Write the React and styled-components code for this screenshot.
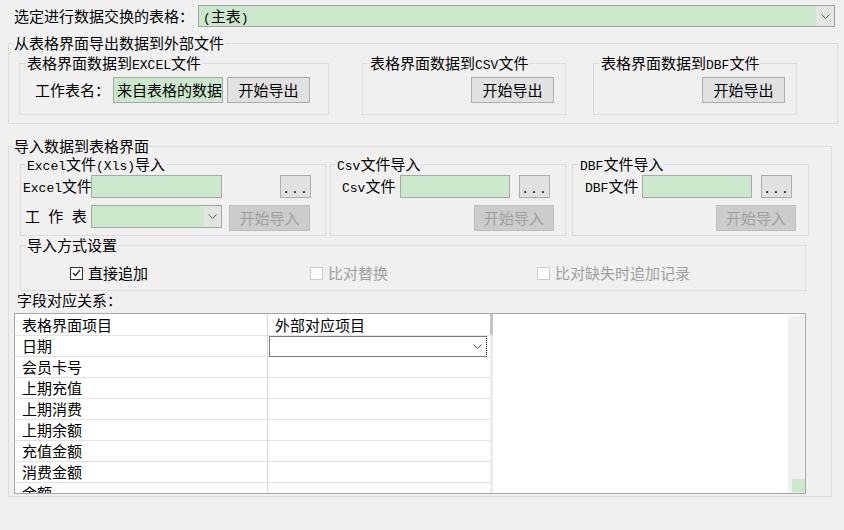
import React from 'react';
import styled, { createGlobalStyle } from 'styled-components';

const Global = createGlobalStyle`
  html, body { margin: 0; padding: 0; background: #f0f0f0; }
  body { font-family: "Noto Sans CJK SC", "Noto Sans", sans-serif; font-size: 15px; color: #000; }
  * { box-sizing: border-box; }
`;

const Page = styled.div`
  width: 844px;
  height: 530px;
  padding-top: 5px;
  overflow: hidden;
`;

const Lat = styled.span`
  font-family: "Liberation Mono", monospace;
  font-size: 13px;
  line-height: 1;
`;

const TopRow = styled.div`
  display: flex;
  align-items: center;
  height: 22px;
  padding: 0 9px 0 14px;
`;

const TopLabel = styled.span`
  width: 184px;
  line-height: 22px;
  white-space: nowrap;
`;

const Combo = styled.div`
  display: flex;
  align-items: stretch;
  height: ${p => p.$h || 22}px;
  width: ${p => (p.$w ? `${p.$w}px` : 'auto')};
  flex: ${p => (p.$w ? 'none' : '1')};
  background: ${p => p.$bg || '#cce8cc'};
  border: 1px solid ${p => p.$border || '#a6a6a6'};
  border-right: ${p => (p.$dotted ? '1px dotted #000' : undefined)};
  margin-left: ${p => p.$ml || 0}px;
`;

const ComboText = styled.span`
  flex: 1;
  padding-left: 4px;
  line-height: ${p => p.$lh || 20}px;
  white-space: nowrap;
  overflow: hidden;
`;

const ComboArrow = styled.span`
  width: ${p => p.$w || 17}px;
  display: flex;
  align-items: center;
  justify-content: center;
  background: ${p => p.$bg || 'transparent'};
`;

const Chevron = () => (
  <svg width="9" height="5" viewBox="0 0 9 5">
    <path d="M0.5 0.5 L4.5 4.5 L8.5 0.5" stroke="#5a5a5a" strokeWidth="1" fill="none" />
  </svg>
);

const Group = styled.fieldset`
  margin: ${p => p.$m || '0'};
  padding: ${p => p.$p || '0'};
  width: ${p => p.$w}px;
  min-width: 0;
  border: 1px solid #dcdcdc;
  flex: none;
`;

const Legend = styled.legend`
  padding: 0 1px;
  margin-left: ${p => (p.$ml !== undefined ? p.$ml : 6)}px;
  height: 18px;
  line-height: 18px;
  font-size: 15px;
  white-space: nowrap;
  overflow: visible;
`;

const GroupRow = styled.div`
  display: flex;
  align-items: flex-start;
  padding-left: ${p => p.$pl || 0}px;
`;

const InnerRow = styled.div`
  display: flex;
  align-items: ${p => p.$align || 'center'};
  justify-content: ${p => p.$justify || 'flex-start'};
  height: ${p => p.$h || 26}px;
  padding-left: ${p => p.$pl || 0}px;
  padding-right: ${p => p.$pr || 0}px;
  margin-top: ${p => p.$mt || 0}px;
`;

const Label = styled.span`
  width: ${p => p.$w}px;
  height: 20px;
  flex: none;
  white-space: pre;
  word-spacing: ${p => p.$ws || 0}px;
  line-height: 20px;
  margin-top: ${p => p.$mt || 0}px;
`;

const Input = styled.div`
  width: ${p => p.$w}px;
  height: ${p => p.$h || 23}px;
  flex: none;
  background: #cce8cc;
  border: 1px solid #a9a9a9;
  padding-left: 3px;
  line-height: ${p => (p.$h || 23) - 2}px;
  white-space: nowrap;
  overflow: hidden;
`;

const Button = styled.button`
  width: ${p => p.$w}px;
  height: ${p => p.$h || 26}px;
  margin-left: ${p => p.$ml || 0}px;
  flex: none;
  padding: 0;
  background: ${p => (p.disabled ? '#cccccc' : '#e1e1e1')};
  border: 1px solid ${p => (p.disabled ? '#bfbfbf' : '#adadad')};
  color: ${p => (p.disabled ? '#a0a0a0' : '#000')};
  font-family: inherit;
  font-size: 15px;
  line-height: ${p => (p.$h || 26) - 2}px;
`;

const Dots = styled.span`
  font-family: "Liberation Mono", monospace;
  font-size: 13px;
  letter-spacing: 1px;
`;

const ImportCol = styled.div`
  display: flex;
  flex-direction: column;
`;

const CheckRow = styled.div`
  display: grid;
  grid-template-columns: 240px 227px auto;
  height: 18px;
  padding-left: 49px;
  align-items: center;
`;

const CheckItem = styled.label`
  display: flex;
  align-items: center;
  gap: 5px;
  height: 18px;
  color: ${p => (p.$disabled ? '#a0a0a0' : '#000')};
  line-height: 18px;
`;

const Box = styled.span`
  width: 13px;
  height: 13px;
  border: 1px solid ${p => (p.$disabled ? '#cccccc' : '#333333')};
  background: #fff;
  display: flex;
  align-items: center;
  justify-content: center;
`;

const Check = ({ checked, disabled, children }) => (
  <CheckItem $disabled={disabled}>
    <Box $disabled={disabled}>
      {checked && (
        <svg width="9" height="8" viewBox="0 0 9 8">
          <path d="M1 4 L3.5 6.5 L8 1" stroke="#222" strokeWidth="1.2" fill="none" />
        </svg>
      )}
    </Box>
    {children}
  </CheckItem>
);

const FieldLabel = styled.div`
  height: 22px;
  padding-left: 8px;
  line-height: 18px;
`;

const Table = styled.div`
  margin-left: 5px;
  width: 792px;
  height: 181px;
  border: 1px solid #a8a8a8;
  background: #fff;
  display: flex;
  overflow: hidden;
`;

const Grid = styled.div`
  width: 475px;
  flex: none;
  overflow: hidden;
`;

const GridRow = styled.div`
  display: grid;
  grid-template-columns: 253px 222px;
  height: ${p => (p.$header ? 22 : 21)}px;
  border-bottom: 1px solid #e2e2e2;
`;

const Cell = styled.div`
  padding-left: ${p => (p.$combo ? 1 : 7)}px;
  height: ${p => (p.$header ? 21 : 20)}px;
  line-height: ${p => (p.$header ? 21 : 20)}px;
  border-right: ${p => (p.$first ? '1px solid #dadada' : 'none')};
  white-space: nowrap;
`;

const CellCombo = styled(Combo)`
  position: relative;
  z-index: 1;
`;

const Strip = styled.div`
  width: 3px;
  flex: none;
  background: linear-gradient(#c4c4c4 0 21px, #ebebeb 21px);
`;

const Spacer = styled.div`
  flex: 1;
`;

const VScroll = styled.div`
  width: 17px;
  flex: none;
  margin-top: 2px;
  background: #f0f0f0;
  display: flex;
  flex-direction: column;
  justify-content: flex-end;
  align-items: flex-end;
  padding-bottom: 1px;
`;

const Thumb = styled.div`
  width: 13px;
  height: 13px;
  background: #cce8cc;
`;

const rows = ['日期', '会员卡号', '上期充值', '上期消费', '上期余额', '充值金额', '消费金额', '余额'];

export default function App() {
  return (
    <>
      <Global />
      <Page>
        <TopRow>
          <TopLabel>选定进行数据交换的表格：</TopLabel>
          <Combo $border="#a0a0a0">
            <ComboText>
              <Lat>(</Lat>主表<Lat>)</Lat>
            </ComboText>
            <ComboArrow $w={18} $bg="#e1e8df">
              <Chevron />
            </ComboArrow>
          </Combo>
        </TopRow>

        <Group $w={830} $m="7px 0 0 8px" $p="2px 0 8px 0">
          <Legend $ml={4}>从表格界面导出数据到外部文件</Legend>
          <GroupRow $pl={10}>
            <Group $w={310} $p="5px 0 11px 0">
              <Legend>表格界面数据到<Lat>EXCEL</Lat>文件</Legend>
              <InnerRow $pl={15}>
                <Label $w={78}>工作表名：</Label>
                <Input $w={110} $h={26}>来自表格的数据</Input>
                <Button $w={83} $ml={4}>开始导出</Button>
              </InnerRow>
            </Group>
            <Group $w={204} $m="0 0 0 33px" $p="5px 0 11px 0">
              <Legend>表格界面数据到<Lat>CSV</Lat>文件</Legend>
              <InnerRow $justify="flex-end" $pr={11}>
                <Button $w={83}>开始导出</Button>
              </InnerRow>
            </Group>
            <Group $w={204} $m="0 0 0 27px" $p="5px 0 11px 0">
              <Legend>表格界面数据到<Lat>DBF</Lat>文件</Legend>
              <InnerRow $justify="flex-end" $pr={11}>
                <Button $w={83}>开始导出</Button>
              </InnerRow>
            </Group>
          </GroupRow>
        </Group>

        <Group $w={824} $m="13px 0 0 8px" $p="0 0 2px 0">
          <Legend $ml={4}>导入数据到表格界面</Legend>
          <GroupRow $pl={11}>
            <Group $w={306} $p="2px 0 4px 0">
              <Legend $ml={5}>
                <Lat>Excel</Lat>文件<Lat>(Xls)</Lat>导入
              </Legend>
              <ImportCol>
                <InnerRow $h={23} $pl={2}>
                  <Label $w={68} $mt={-2}>
                    <Lat>Excel</Lat>文件
                  </Label>
                  <Input $w={131} />
                  <Button $w={31} $h={23} $ml={58}>
                    <Dots>...</Dots>
                  </Button>
                </InnerRow>
                <InnerRow $h={26} $mt={7} $pl={4} $align="flex-start">
                  <Label $w={66} $ws={5} $mt={1}>
                    {'工 作 表'}
                  </Label>
                  <Combo $w={131} $h={23}>
                    <ComboText />
                    <ComboArrow $bg="#dfe6dd">
                      <Chevron />
                    </ComboArrow>
                  </Combo>
                  <Button $w={81} $ml={7} disabled>
                    开始导入
                  </Button>
                </InnerRow>
              </ImportCol>
            </Group>
            <Group $w={236} $m="0 0 0 4px" $p="2px 0 4px 0">
              <Legend $ml={5}>
                <Lat>Csv</Lat>文件导入
              </Legend>
              <ImportCol>
                <InnerRow $h={23} $pl={11}>
                  <Label $w={58} $mt={-2}>
                    <Lat>Csv</Lat>文件
                  </Label>
                  <Input $w={110} />
                  <Button $w={31} $h={23} $ml={9}>
                    <Dots>...</Dots>
                  </Button>
                </InnerRow>
                <InnerRow $h={26} $mt={7} $justify="flex-end" $pr={11}>
                  <Button $w={80} disabled>
                    开始导入
                  </Button>
                </InnerRow>
              </ImportCol>
            </Group>
            <Group $w={237} $m="0 0 0 6px" $p="2px 0 4px 0">
              <Legend>
                <Lat>DBF</Lat>文件导入
              </Legend>
              <ImportCol>
                <InnerRow $h={23} $pl={12}>
                  <Label $w={57} $mt={-2}>
                    <Lat>DBF</Lat>文件
                  </Label>
                  <Input $w={110} />
                  <Button $w={31} $h={23} $ml={9}>
                    <Dots>...</Dots>
                  </Button>
                </InnerRow>
                <InnerRow $h={26} $mt={7} $justify="flex-end" $pr={12}>
                  <Button $w={80} disabled>
                    开始导入
                  </Button>
                </InnerRow>
              </ImportCol>
            </Group>
          </GroupRow>

          <Group $w={786} $m="0 0 0 11px" $p="10px 0 8px 0">
            <Legend $ml={5}>导入方式设置</Legend>
            <CheckRow>
              <Check checked>直接追加</Check>
              <Check disabled>比对替换</Check>
              <Check disabled>比对缺失时追加记录</Check>
            </CheckRow>
          </Group>

          <FieldLabel>字段对应关系：</FieldLabel>

          <Table>
            <Grid>
              <GridRow $header>
                <Cell $first $header>表格界面项目</Cell>
                <Cell $header>外部对应项目</Cell>
              </GridRow>
              {rows.map((r, i) => (
                <GridRow key={r}>
                  <Cell $first>{r}</Cell>
                  {i === 0 ? (
                    <Cell $combo>
                      <CellCombo $w={218} $h={21} $bg="#fff" $border="#7a7a7a" $dotted>
                        <ComboText />
                        <ComboArrow $w={18}>
                          <Chevron />
                        </ComboArrow>
                      </CellCombo>
                    </Cell>
                  ) : (
                    <Cell />
                  )}
                </GridRow>
              ))}
            </Grid>
            <Strip />
            <Spacer />
            <VScroll>
              <Thumb />
            </VScroll>
          </Table>
        </Group>
      </Page>
    </>
  );
}
